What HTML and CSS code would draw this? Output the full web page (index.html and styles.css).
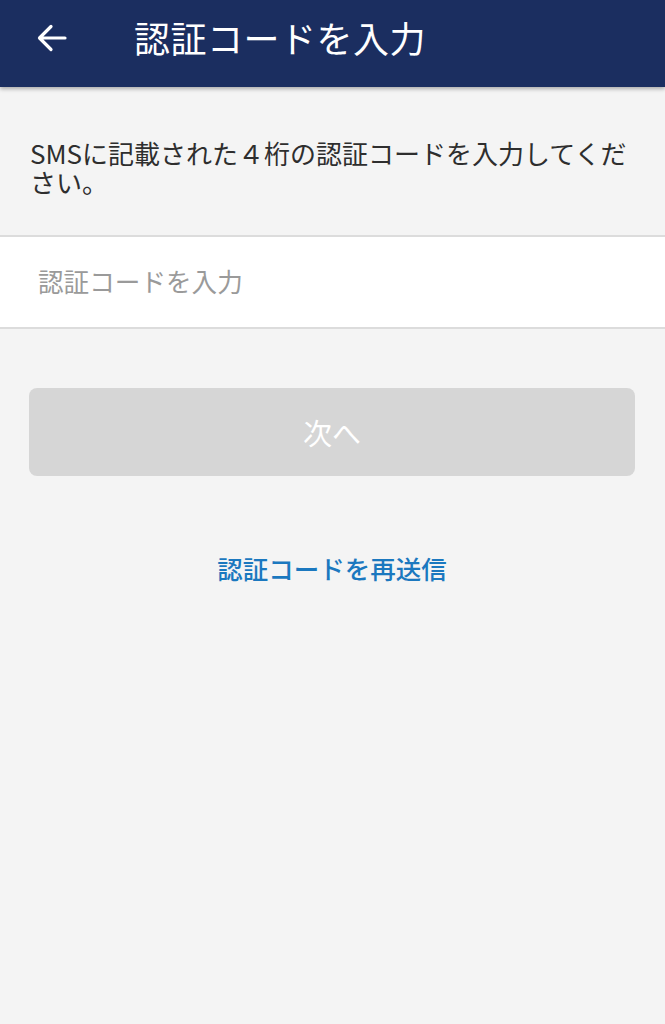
FILE: index.html
```html
<!DOCTYPE html>
<html lang="ja">
<head>
    <meta charset="UTF-8">
    <meta name="viewport" content="width=device-width, initial-scale=1.0">
    <title>認証コードを入力</title>
    <link rel="stylesheet" href="styles.css">
</head>
<body>
    <header class="appbar">
        <button class="back" aria-label="戻る">
            <svg width="30" height="28" viewBox="0 0 30 28">
                <path d="M28 14 H3 M14 2.5 L2.5 14 L14 25.5" fill="none" stroke="#fff" stroke-width="3.2" stroke-linecap="round" stroke-linejoin="round"/>
            </svg>
        </button>
        <h1 class="title">認証コードを入力</h1>
    </header>

    <p class="lead">SMSに記載された４桁の認証コードを入力してください。</p>

    <div class="field">
        <input type="text" class="code" placeholder="認証コードを入力">
    </div>

    <div class="actions">
        <button class="next" disabled>次へ</button>
        <a class="resend" href="#">認証コードを再送信</a>
    </div>
</body>
</html>
```

FILE: styles.css
```css
body {
    margin: 0;
    background: #f4f4f4;
    font-family: "Noto Sans CJK JP", "Noto Sans", sans-serif;
    min-height: 1024px;
}
.appbar {
    height: 87px;
    background: #1b2e60;
    display: flex;
    align-items: center;
    box-shadow: 0 2px 4px rgba(0, 0, 0, 0.3);
    position: relative;
}
.back {
    background: none;
    border: none;
    padding: 0;
    margin: 0 0 12px 37px;
    width: 30px;
    height: 28px;
    display: flex;
}
.title {
    margin: 0 0 14px 67px;
    color: #fff;
    font-size: 36px;
    font-weight: 400;
    letter-spacing: 0.5px;
}
.lead {
    margin: 0;
    padding: 51px 30px 34px;
    font-size: 26px;
    line-height: 29px;
    color: #2e2e2e;
    height: 63px;
}
.field {
    background: #fff;
    border-top: 2px solid #dcdcdc;
    border-bottom: 2px solid #dcdcdc;
    height: 90px;
    display: flex;
    align-items: center;
}
.code {
    border: none;
    outline: none;
    background: transparent;
    font-family: inherit;
    font-size: 25.6px;
    padding: 0 0 4px 38px;
    width: 100%;
    color: #333;
}
.code::placeholder {
    color: #9a9a9a;
}
.actions {
    padding: 59px 30px 0 29px;
    display: flex;
    flex-direction: column;
    align-items: center;
}
.next {
    width: 100%;
    height: 88px;
    border: none;
    border-radius: 8px;
    background: #d6d6d6;
    color: #fff;
    font-family: inherit;
    font-size: 29px;
    padding: 0;
}
.resend {
    margin-top: 73px;
    color: #1b78bf;
    text-decoration: none;
    font-size: 25.5px;
    font-weight: 500;
}
```
